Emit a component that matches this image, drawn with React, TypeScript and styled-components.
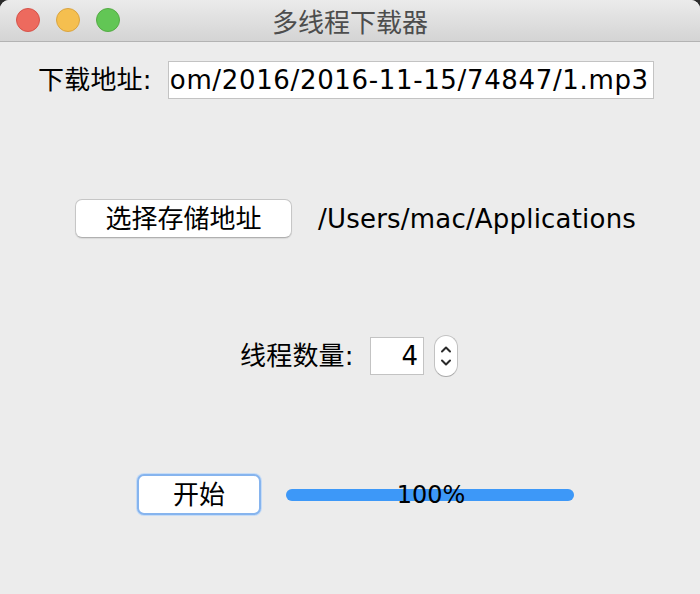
import React from "react";
import styled, { createGlobalStyle } from "styled-components";

const Global = createGlobalStyle`
  html, body { margin: 0; padding: 0; background: #2b2b2b; }
  body { font-family: "DejaVu Sans", "Noto Sans CJK SC", sans-serif; }
`;

const Window = styled.div`
  width: 700px;
  height: 594px;
  background: #ececec;
  border-radius: 9px 9px 0 0;
  overflow: hidden;
  display: flex;
  flex-direction: column;
`;

const TitleBar = styled.div`
  position: relative;
  height: 41px;
  flex: none;
  background: linear-gradient(#ebebeb, #d4d4d4);
  border-bottom: 1px solid #b3b3b3;
  display: flex;
  align-items: center;
  justify-content: center;
`;

const Lights = styled.div`
  position: absolute;
  left: 16px;
  top: 8px;
  display: flex;
  gap: 16px;
`;

const Light = styled.span<{ $c: string; $b: string }>`
  width: 22px;
  height: 22px;
  border-radius: 50%;
  background: ${(p) => p.$c};
  border: 1px solid ${(p) => p.$b};
`;

const Title = styled.div`
  font-family: "Noto Sans CJK SC", sans-serif;
  font-size: 26px;
  color: #4d4d4d;
  line-height: 1;
`;

const Content = styled.div`
  display: flex;
  flex-direction: column;
`;

const Row = styled.div<{ $top: number; $left: number; $gap: number }>`
  display: flex;
  align-items: center;
  margin-top: ${(p) => p.$top}px;
  padding-left: ${(p) => p.$left}px;
  gap: ${(p) => p.$gap}px;
`;

const Label = styled.span`
  font-size: 26px;
  color: #000;
  line-height: 1;
  letter-spacing: 0.2px;
  white-space: nowrap;
`;

const TextField = styled.div<{ $w: number }>`
  width: ${(p) => p.$w}px;
  height: 38px;
  box-sizing: border-box;
  background: #fff;
  border: 1px solid #c3c3c3;
  display: flex;
  align-items: center;
  justify-content: flex-end;
  padding-right: 4px;
  overflow: hidden;
  font-size: 26px;
  letter-spacing: 0.65px;
  line-height: 1;
  white-space: nowrap;
  color: #000;
`;

const Button = styled.div<{ $w: number; $h: number; $focus?: boolean }>`
  width: ${(p) => p.$w}px;
  height: ${(p) => p.$h}px;
  box-sizing: border-box;
  background: #fff;
  border-radius: 7px;
  border: ${(p) => (p.$focus ? "2px solid #86b4ee" : "1px solid #c6c6c6")};
  border-bottom-color: ${(p) => (p.$focus ? "#86b4ee" : "#b0b0b0")};
  box-shadow: ${(p) =>
    p.$focus ? "0 0 0 1px #c6dcf6" : "0 1px 1px rgba(0,0,0,0.08)"};
  display: flex;
  align-items: center;
  justify-content: center;
  font-size: 26px;
  line-height: 1;
  color: #000;
`;

const SpinGroup = styled.div`
  display: flex;
  align-items: center;
  gap: 10px;
`;

const SpinButtons = styled.div`
  width: 24px;
  height: 42px;
  box-sizing: border-box;
  background: #fff;
  border: 1px solid #c2c2c2;
  border-bottom-color: #a8a8a8;
  border-radius: 12px;
  display: flex;
  flex-direction: column;
  align-items: center;
  justify-content: center;
  gap: 6px;
`;

const ProgressWrap = styled.div`
  position: relative;
  width: 288px;
  height: 12px;
  border-radius: 6px;
  background: #dcdcdc;
`;

const ProgressFill = styled.div`
  height: 100%;
  border-radius: 6px;
  background: #3d98f8;
`;

const ProgressText = styled.span`
  position: absolute;
  left: 0;
  right: 0;
  top: 50%;
  transform: translateY(-50%);
  text-align: center;
  font-size: 24px;
  line-height: 1;
  color: #000;
  padding-left: 2px;
`;

const Chevron = ({ up }: { up?: boolean }) => (
  <svg width="12" height="8" viewBox="0 0 12 8">
    <path
      d={up ? "M2 6.5 L6 2.5 L10 6.5" : "M2 1.5 L6 5.5 L10 1.5"}
      fill="none"
      stroke="#2a2a2a"
      strokeWidth="2"
      strokeLinecap="round"
      strokeLinejoin="round"
    />
  </svg>
);

export default function App() {
  const progress = 100;
  return (
    <>
      <Global />
      <Window>
        <TitleBar>
          <Lights>
            <Light $c="#ed6a5e" $b="#d5534a" />
            <Light $c="#f5bf4f" $b="#d9a441" />
            <Light $c="#62c655" $b="#55ab45" />
          </Lights>
          <Title>多线程下载器</Title>
        </TitleBar>
        <Content>
          <Row $top={19} $left={38} $gap={16}>
            <Label>下载地址:</Label>
            <TextField $w={486}>om/2016/2016-11-15/74847/1.mp3</TextField>
          </Row>
          <Row $top={100} $left={75} $gap={26}>
            <Button $w={217} $h={39}>选择存储地址</Button>
            <Label>/Users/mac/Applications</Label>
          </Row>
          <Row $top={97} $left={240} $gap={16}>
            <Label>线程数量:</Label>
            <SpinGroup>
              <TextField $w={54}>4</TextField>
              <SpinButtons>
                <Chevron up />
                <Chevron />
              </SpinButtons>
            </SpinGroup>
          </Row>
          <Row $top={97} $left={137} $gap={25}>
            <Button $w={124} $h={41} $focus>开始</Button>
            <ProgressWrap>
              <ProgressFill style={{ width: `${progress}%` }} />
              <ProgressText>{progress}%</ProgressText>
            </ProgressWrap>
          </Row>
        </Content>
      </Window>
    </>
  );
}
